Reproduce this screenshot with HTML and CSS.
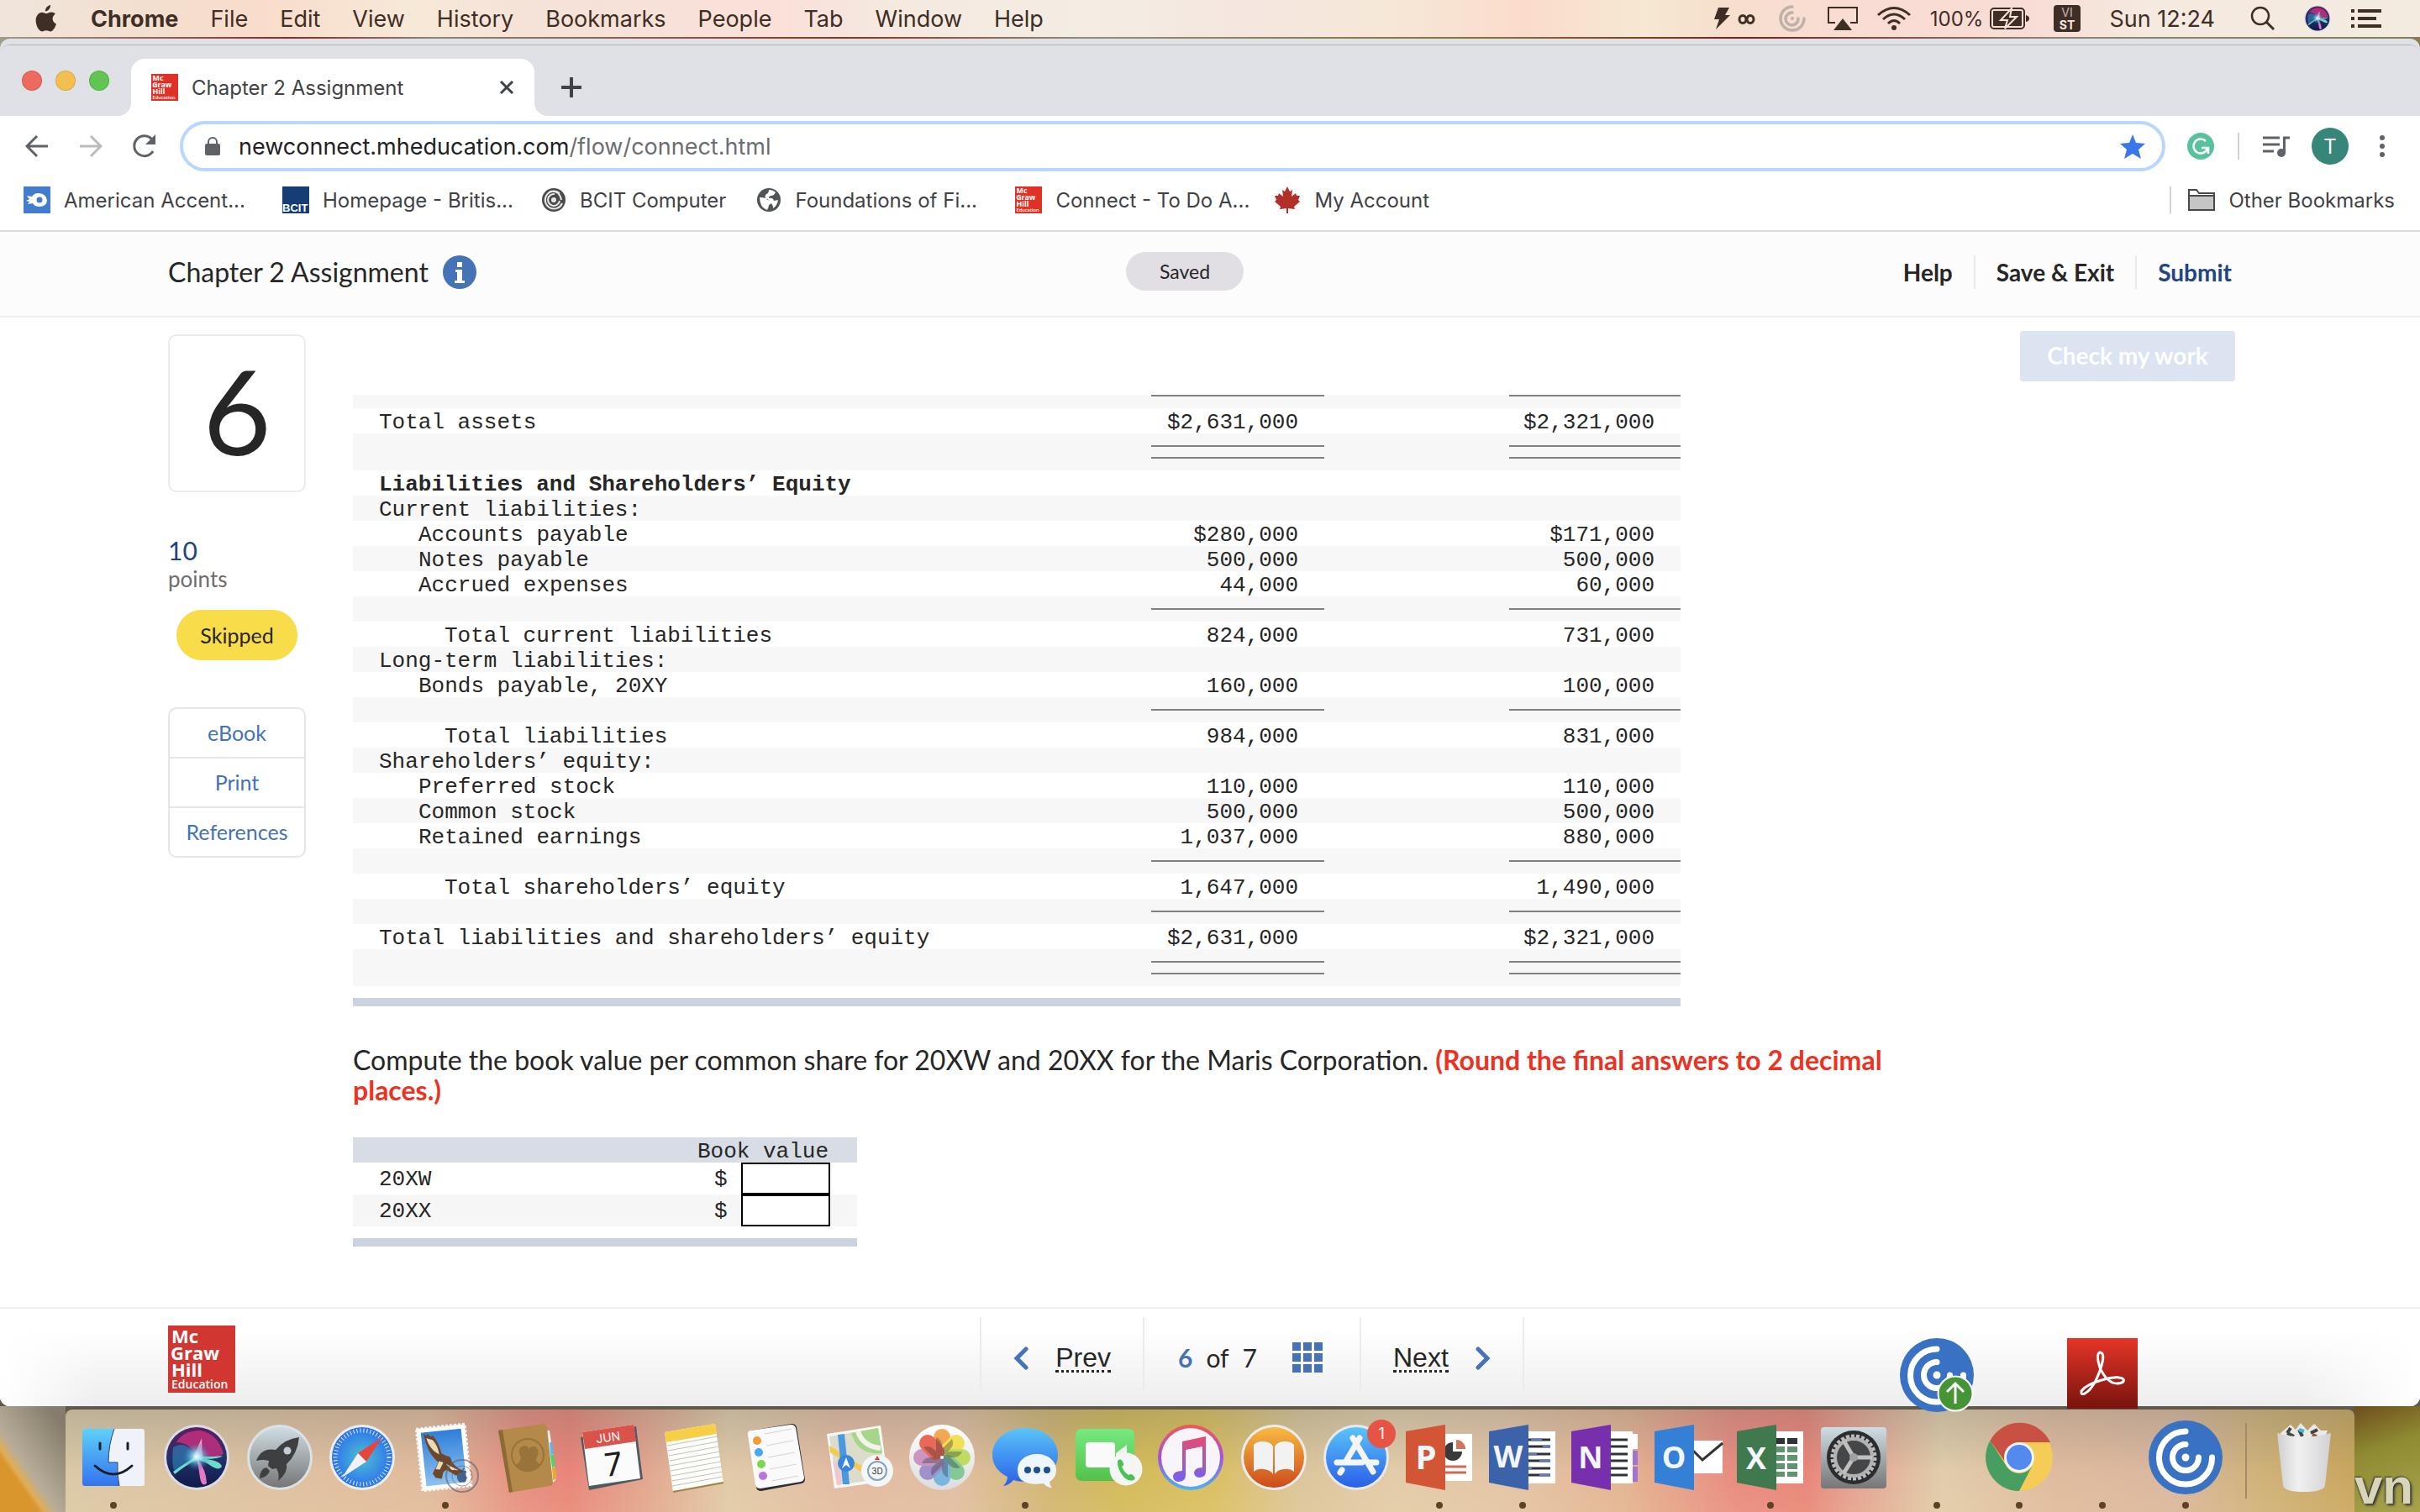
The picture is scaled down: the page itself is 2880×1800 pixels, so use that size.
FILE: index.html
```html
<!DOCTYPE html>
<html lang="en">
<head>
<meta charset="utf-8">
<title>Chapter 2 Assignment</title>
<link rel="stylesheet" href="styles.css">
</head>
<body>
<svg class="defs" width="0" height="0" aria-hidden="true">
  <defs>
    <linearGradient id="gBlue" x1="0" y1="0" x2="0" y2="1"><stop offset="0" stop-color="#5ac4f9"/><stop offset="1" stop-color="#2a5fe8"/></linearGradient>
    <linearGradient id="gFinder" x1="0" y1="0" x2="0" y2="1"><stop offset="0" stop-color="#5fd0f8"/><stop offset="1" stop-color="#3273ee"/></linearGradient>
    <linearGradient id="gSilver" x1="0" y1="0" x2="0" y2="1"><stop offset="0" stop-color="#cfdde3"/><stop offset="1" stop-color="#767676"/></linearGradient>
    <linearGradient id="gWhite" x1="0" y1="0" x2="0" y2="1"><stop offset="0" stop-color="#fff"/><stop offset="1" stop-color="#dcdcde"/></linearGradient>
    <linearGradient id="gOrange" x1="0" y1="0" x2="0" y2="1"><stop offset="0" stop-color="#f7bb42"/><stop offset="1" stop-color="#cc4b1d"/></linearGradient>
    <linearGradient id="gGreen" x1="0" y1="0" x2="0" y2="1"><stop offset="0" stop-color="#76ea80"/><stop offset="1" stop-color="#53c14b"/></linearGradient>
    <linearGradient id="gRed" x1="0" y1="0" x2="0" y2="1"><stop offset="0" stop-color="#e53528"/><stop offset="1" stop-color="#78130d"/></linearGradient>
    <linearGradient id="gMusic" x1="0" y1="0" x2="0" y2="1"><stop offset="0" stop-color="#f2584f"/><stop offset=".5" stop-color="#a64fe0"/><stop offset="1" stop-color="#47b6f5"/></linearGradient>
    <linearGradient id="gNote" x1="0" y1="0" x2="0" y2="1"><stop offset="0" stop-color="#ea4b6d"/><stop offset="1" stop-color="#6f62f6"/></linearGradient>
    <linearGradient id="gBin" x1="0" y1="0" x2="1" y2="0"><stop offset="0" stop-color="#cfcfd1"/><stop offset=".4" stop-color="#f1f1f2"/><stop offset="1" stop-color="#d2d2d4"/></linearGradient>
    <linearGradient id="gSky" x1="0" y1="0" x2="0" y2="1"><stop offset="0" stop-color="#2f7edb"/><stop offset="1" stop-color="#8dc2ef"/></linearGradient>
    <radialGradient id="gSafari"><stop offset="0" stop-color="#4fc0cf"/><stop offset="1" stop-color="#2b72ee"/></radialGradient>
    <radialGradient id="gGlow"><stop offset="0" stop-color="#fff"/><stop offset=".35" stop-color="#8fe6f5" stop-opacity=".7"/><stop offset="1" stop-color="#2c6fa8" stop-opacity="0"/></radialGradient>
    <linearGradient id="gSiri" x1="0" y1="0" x2="0" y2="1"><stop offset="0" stop-color="#5a1f5e"/><stop offset=".5" stop-color="#26306a"/><stop offset="1" stop-color="#0c1c4a"/></linearGradient>
  </defs>
  <symbol id="citrix" viewBox="0 0 88 88">
    <circle cx="44" cy="44" r="44" fill="#3972c2"/>
    <circle cx="44" cy="44" r="4.500" fill="#fff"/>
    <g fill="none" stroke="#fff" stroke-width="7" stroke-linecap="round"><path d="M44 13A31.500 31.500 0 1 0 75.500 44"/><path d="M44 28.500A15.500 15.500 0 1 0 59.500 44"/></g>
  </symbol>
  <symbol id="siri" viewBox="0 0 80 80">
    <circle cx="40" cy="40" r="39" fill="#dcdde2"/><circle cx="40" cy="40" r="36" fill="url(#gSiri)"/>
    <path d="M16 22Q24 8 44 8Q66 12 72 36Q60 42 40 40Q32 22 16 22Z" fill="#c9307f" opacity=".8"/>
    <path d="M40 40Q28 18 12 28Q10 52 14 56Q30 50 40 40Z" fill="#2f9ad0" opacity=".5"/>
    <path d="M12 57Q28 46 40 38Q56 40 71 38Q66 42 52 42Q68 44 70 51Q66 57 54 48Q44 42 38 44Q26 50 14 60Z" fill="#74eed6" opacity=".9"/>
    <path d="M40 40Q52 56 52 71Q46 76 44 64Q42 50 40 40Z" fill="#e877c4"/><path d="M36 40L46 17L47 42Z" fill="#f6b6dc" opacity=".8"/>
    <circle cx="40" cy="39" r="17" fill="url(#gGlow)"/>
  </symbol>
</svg>

<header class="menubar">
  <svg class="apple" viewBox="0 0 26 32" aria-label="Apple"><path d="M18 0c.3 3.600-2.600 7.400-6 7.400C11.600 4 14.600.500 18 0zM23.800 10.800c-5 3.200-3.700 9.800 1.200 11.600C23.700 26.400 20.900 31.500 18 31.500c-2 0-2.700-1.200-5-1.200s-3.200 1.200-5 1.200C4.500 31.500.6 24.600.6 18.600c0-6 3.600-9.900 7.400-9.900 2.400 0 3.900 1.400 5.500 1.400s2.900-1.500 5.900-1.500c1.800 0 3.400.800 4.400 2.200z" fill="#3e2e26"/></svg>
  <nav class="menus" aria-label="Application menu">
    <button class="app">Chrome</button><button>File</button><button>Edit</button><button>View</button><button>History</button><button>Bookmarks</button><button>People</button><button>Tab</button><button>Window</button><button>Help</button>
  </nav>
  <div class="status">
    <svg width="54" height="32" viewBox="0 0 54 32" class="m-bolt"><path d="M8 3h13l-5 9h6L5 29l4-12H3z" fill="#3e2e26"/><g fill="none" stroke="#3e2e26" stroke-width="3"><ellipse cx="37" cy="17" rx="4" ry="4.500"/><ellipse cx="46" cy="17" rx="4" ry="4.500"/></g></svg>
    <svg width="32" height="32" viewBox="0 0 32 32" class="m-citrix"><g fill="none" stroke="#bfb0a8" stroke-width="3.500" stroke-linecap="round"><path d="M16 2A14 14 0 1 0 30 16"/><path d="M16 9A7.500 7.500 0 1 0 23 16"/></g><circle cx="16" cy="16" r="2" fill="#bfb0a8"/></svg>
    <svg width="36" height="30" viewBox="0 0 36 30" class="m-air"><path d="M9 20H1V2h34v18h-8" fill="none" stroke="#3e2e26" stroke-width="2"/><path d="M18 15l11 14H7z" fill="#3e2e26"/></svg>
    <svg width="42" height="30" viewBox="0 0 42 30" class="m-wifi"><g fill="none" stroke="#3e2e26" stroke-width="3"><path d="M2 11Q21-6 40 11"/><path d="M8 16Q21 4 34 16"/><path d="M14 21Q21 14 28 21"/></g><circle cx="21" cy="26" r="3" fill="#3e2e26"/></svg>
    <span class="pct">100%</span>
    <svg width="48" height="26" viewBox="0 0 48 26" class="m-batt"><rect x="1" y="1" width="40" height="24" rx="4" fill="none" stroke="#3e2e26" stroke-width="2"/><rect x="4" y="4" width="34" height="18" rx="1" fill="#3e2e26"/><path d="M43 9q4 1 4 4t-4 4z" fill="#3e2e26"/><path d="M26 1L13 15h8l-3 10 14-14h-8z" fill="#3e2e26" stroke="#f8e3db" stroke-width="2"/></svg>
    <svg width="32" height="32" viewBox="0 0 32 32" class="m-vist"><rect width="32" height="32" rx="4" fill="#3e2e26"/><g fill="#f8e8e0" font-family="Inter, sans-serif" font-size="14" text-anchor="middle"><text x="16" y="14" opacity=".7">VI</text><text x="16" y="29" font-weight="700">ST</text></g></svg>
    <span class="clock">Sun 12:24</span>
    <svg width="30" height="30" viewBox="0 0 30 30" class="m-search"><circle cx="12" cy="12" r="10" fill="none" stroke="#3e2e26" stroke-width="2.500"/><path d="M19 19l9 9" stroke="#3e2e26" stroke-width="3"/></svg>
    <svg width="32" height="32" class="m-siri"><use href="#siri"/></svg>
    <svg width="36" height="22" viewBox="0 0 36 22"><path d="M0 2h4M8 2h28M0 11h4M8 11h22M0 20h4M8 20h28" stroke="#3e2e26" stroke-width="4"/></svg>
  </div>
</header>

<div class="back-window">
<div class="window">
  <div class="tabstrip">
    <div class="lights"><button aria-label="Close" class="red"></button><button aria-label="Minimise" class="amber"></button><button aria-label="Zoom" class="green"></button></div>
    <div class="tab">
      <svg width="32" height="32" viewBox="0 0 80 80"><rect width="80" height="80" fill="#e03127"/><g class="mgh"><text x="4" y="21">Mc</text><text x="3" y="41">Graw</text><text x="4" y="61">Hill</text><text x="4" y="75" class="edu">Education</text></g></svg>
      <span>Chapter 2 Assignment</span>
      <button aria-label="Close tab"><svg width="18" height="18" viewBox="0 0 18 18"><path d="M2 2l14 14M16 2L2 16" stroke="#3f4246" stroke-width="3"/></svg></button>
    </div>
    <button class="newtab" aria-label="New tab"><svg width="24" height="24" viewBox="0 0 24 24"><path d="M12 0v24M0 12h24" stroke="#3f4246" stroke-width="4"/></svg></button>
  </div>

  <div class="toolbar">
    <button aria-label="Back"><svg width="28" height="28" viewBox="0 0 28 28"><path d="M27 14H3M14 2L2 14l12 12" fill="none" stroke="#5f6368" stroke-width="3"/></svg></button>
    <button aria-label="Forward"><svg width="28" height="28" viewBox="0 0 28 28"><path d="M1 14h24M14 2l12 12-12 12" fill="none" stroke="#b9bbbd" stroke-width="3"/></svg></button>
    <button aria-label="Reload"><svg width="28" height="28" viewBox="0 0 28 28"><path d="M24 20A12 12 0 1 1 23 6" fill="none" stroke="#5f6368" stroke-width="3"/><path d="M27 0v12H15z" fill="#5f6368"/></svg></button>
    <div class="omnibox">
      <svg width="18" height="22" viewBox="0 0 18 22"><rect y="8" width="18" height="14" rx="2" fill="#5f6368"/><path d="M4 9V6a5 5 0 0 1 10 0v3" fill="none" stroke="#5f6368" stroke-width="2"/></svg>
      <span class="url">newconnect.mheducation.com<i>/flow/connect.html</i></span>
      <svg width="30" height="29" viewBox="0 0 30 29"><path d="M15 0l4 10 11 1-8 7 3 11-10-6-10 6 3-11-8-7 11-1z" fill="#3b78e7"/></svg>
    </div>
    <svg class="gram" width="32" height="32" viewBox="0 0 32 32"><circle cx="16" cy="16" r="16" fill="#57c39d"/><path d="M22 10A8.500 8.500 0 1 0 24 19M17 18h8v7" fill="none" stroke="#fff" stroke-width="2.500"/></svg>
    <span class="sep"></span>
    <svg class="playlist" width="32" height="26" viewBox="0 0 32 26"><path d="M0 3h20M0 11h20M0 19h13" stroke="#5f6368" stroke-width="3"/><path d="M24 1.500h8v3h-5V21h-3z" fill="#5f6368"/><circle cx="22" cy="21" r="5" fill="#5f6368"/></svg>
    <button class="avatar">T</button>
    <button aria-label="Menu"><svg width="8" height="28" viewBox="0 0 8 28"><g fill="#5f6368"><circle cx="4" cy="4" r="3"/><circle cx="4" cy="14" r="3"/><circle cx="4" cy="24" r="3"/></g></svg></button>
  </div>

  <nav class="bookmarks" aria-label="Bookmarks">
    <a href="#" class="clipped"><svg width="32" height="32" viewBox="0 0 32 32"><rect width="32" height="32" fill="#437ccc"/><path d="M3 17l4-2-3-4 6 1q3-4 7-4 10 0 11 9-1 7-9 7-6 0-8-4l-6 1 2-3z" fill="#fff"/><circle cx="19" cy="16" r="3.500" fill="#437ccc"/></svg>American Accent...</a>
    <a href="#" class="clipped"><svg width="32" height="32" viewBox="0 0 32 32"><rect width="32" height="32" fill="#163e75"/><text x="0" y="30" font-family="Liberation Sans, sans-serif" font-size="13" font-weight="700" fill="#fff">BCIT</text></svg>Homepage - Britis...</a>
    <a href="#"><svg width="30" height="32" viewBox="1 0 30 32"><circle cx="16" cy="16" r="14" fill="#4a4a4a"/><g fill="none" stroke="#e8e8e8" stroke-width="2"><path d="M23 8A10.500 10.500 0 1 0 26 20"/><path d="M17 9A7 7 0 1 0 23 17"/><path d="M11 6q12-2 14 10"/></g><circle cx="16" cy="16" r="3" fill="#e8e8e8"/></svg>BCIT Computer</a>
    <a href="#" class="clipped"><svg width="30" height="32" viewBox="0 0 28 32"><circle cx="14" cy="16" r="14" fill="#505357"/><path d="M3 13q8 0 9 3 4 0 5 3-1 3-3 3 0 3-2 6Q3 25 3 13zM14 4q5 0 8 3-2 4-5 4-3 0-3 3 5-1 6 3l5-1q-1 7-6 10 0-5-3-6 1-4-5-5-3-3 0-6 3-1 3-5z" fill="#fff"/></svg>Foundations of Fi...</a>
    <a href="#" class="clipped"><svg width="32" height="32" viewBox="0 0 80 80"><rect width="80" height="80" fill="#e03127"/><g class="mgh"><text x="4" y="21">Mc</text><text x="3" y="41">Graw</text><text x="4" y="61">Hill</text><text x="4" y="75" class="edu">Education</text></g></svg>Connect - To Do A...</a>
    <a href="#"><svg width="32" height="32" viewBox="0 0 32 32"><path d="M16 0l3 6 3-2-1 8 5-4 1 3h4l-2 5 2 2-7 6 1 3-8-1v6h-2v-6l-8 1 1-3-7-6 2-2-2-5h4l1-3 5 4-1-8 3 2z" fill="#b3302a"/></svg>My Account</a>
    <a href="#" class="other"><svg width="32" height="28" viewBox="0 0 32 28"><path d="M1 26V2h9l3 4h18v20z" fill="#fff" stroke="#48494b" stroke-width="2"/><path d="M2 10h28v15H2z" fill="#c5c5c5"/><path d="M1 9h30" stroke="#48494b" stroke-width="2"/></svg>Other Bookmarks</a>
  </nav>

  <header class="apphead">
    <h1>Chapter 2 Assignment</h1>
    <button class="info" aria-label="Information"><svg width="40" height="40" viewBox="0 0 40 40"><circle cx="20" cy="20" r="20" fill="#4573b6"/><path d="M17 8h6v6h-6zM15 17h8v13h3v3H14v-3h3V20h-2z" fill="#fff"/></svg></button>
    <span class="saved">Saved</span>
    <nav class="actions"><a href="#">Help</a><a href="#">Save &amp; Exit</a><a href="#" class="submit">Submit</a></nav>
  </header>

  <main class="content">
    <aside class="side">
      <div class="number">6</div>
      <p class="score"><b>10</b>points</p>
      <span class="skipped">Skipped</span>
      <nav class="tools"><a href="#">eBook</a><a href="#">Print</a><a href="#">References</a></nav>
    </aside>
    <section class="question">
      <table class="sheet">
        <colgroup><col><col class="amt"><col class="gap"><col class="amt2"></colgroup>
        <tr class="thin"><td></td><td><span class="rule"></span></td><td></td><td><span class="rule"></span></td></tr>
        <tr><td>Total assets</td><td>$2,631,000</td><td></td><td>$2,321,000</td></tr>
        <tr class="tall"><td></td><td><span class="rule2"></span></td><td></td><td><span class="rule2"></span></td></tr>
        <tr><th scope="row">Liabilities and Shareholders’ Equity</th><td></td><td></td><td></td></tr>
        <tr><td>Current liabilities:</td><td></td><td></td><td></td></tr>
        <tr><td class="in1">Accounts payable</td><td>$280,000</td><td></td><td>$171,000</td></tr>
        <tr><td class="in1">Notes payable</td><td>500,000</td><td></td><td>500,000</td></tr>
        <tr><td class="in1">Accrued expenses</td><td>44,000</td><td></td><td>60,000</td></tr>
        <tr class="line"><td></td><td><span class="rule"></span></td><td></td><td><span class="rule"></span></td></tr>
        <tr><td class="in2">Total current liabilities</td><td>824,000</td><td></td><td>731,000</td></tr>
        <tr><td>Long-term liabilities:</td><td></td><td></td><td></td></tr>
        <tr><td class="in1">Bonds payable, 20XY</td><td>160,000</td><td></td><td>100,000</td></tr>
        <tr class="line"><td></td><td><span class="rule"></span></td><td></td><td><span class="rule"></span></td></tr>
        <tr><td class="in2">Total liabilities</td><td>984,000</td><td></td><td>831,000</td></tr>
        <tr><td>Shareholders’ equity:</td><td></td><td></td><td></td></tr>
        <tr><td class="in1">Preferred stock</td><td>110,000</td><td></td><td>110,000</td></tr>
        <tr><td class="in1">Common stock</td><td>500,000</td><td></td><td>500,000</td></tr>
        <tr><td class="in1">Retained earnings</td><td>1,037,000</td><td></td><td>880,000</td></tr>
        <tr class="line"><td></td><td><span class="rule"></span></td><td></td><td><span class="rule"></span></td></tr>
        <tr><td class="in2">Total shareholders’ equity</td><td>1,647,000</td><td></td><td>1,490,000</td></tr>
        <tr class="line"><td></td><td><span class="rule"></span></td><td></td><td><span class="rule"></span></td></tr>
        <tr><td>Total liabilities and shareholders’ equity</td><td>$2,631,000</td><td></td><td>$2,321,000</td></tr>
        <tr class="tall"><td></td><td><span class="rule2"></span></td><td></td><td><span class="rule2"></span></td></tr>
      </table>
      <div class="bar wide"></div>
      <p class="ask">Compute the book value per common share for 20XW and 20XX for the Maris Corporation. <strong>(Round the final answers to 2 decimal places.)</strong></p>
      <table class="answers">
        <colgroup><col><col class="cur"><col class="box"></colgroup>
        <tr><th colspan="3">Book value</th></tr>
        <tr><td><label for="xw">20XW</label></td><td>$</td><td><input id="xw" type="text"></td></tr>
        <tr><td><label for="xx">20XX</label></td><td>$</td><td><input id="xx" type="text"></td></tr>
      </table>
      <div class="bar narrow"></div>
    </section>
    <button class="check" disabled>Check my work</button>
  </main>

  <footer class="foot">
    <svg width="80" height="80" viewBox="0 0 80 80"><rect width="80" height="80" fill="#d13631"/><g class="mgh"><text x="4" y="21">Mc</text><text x="3" y="41">Graw</text><text x="4" y="61">Hill</text><text x="4" y="75" class="edu">Education</text></g></svg>
    <nav class="pager">
      <a href="#" class="step"><svg width="18" height="28" viewBox="0 0 18 28"><path d="M15 3L4 14l11 11" fill="none" stroke="#4573b6" stroke-width="5" stroke-linecap="round"/></svg><span>Prev</span></a>
      <div class="count"><b>6</b><span>of</span><span>7</span><svg width="36" height="36" viewBox="0 0 36 36"><path d="M0 0h10v10H0zM13 0h10v10H13zM26 0h10v10H26zM0 13h10v10H0zM13 13h10v10H13zM26 13h10v10H26zM0 26h10v10H0zM13 26h10v10H13zM26 26h10v10H26z" fill="#4573b6"/></svg></div>
      <a href="#" class="step"><span>Next</span><svg width="18" height="28" viewBox="0 0 18 28"><path d="M3 3l11 11L3 25" fill="none" stroke="#4573b6" stroke-width="5" stroke-linecap="round"/></svg></a>
    </nav>
  </footer>
</div>
</div>

<div class="shelf">
<span class="mark">vn</span>
<nav class="dock" aria-label="Dock">
  <ul>
    <li class="on"><svg viewBox="0 0 80 80"><rect x="3" y="6" width="74" height="68" rx="3" fill="#eff3f9"/><path d="M6 6h35q-7 19-7 40h11q-1 14 2 28H6q-3 0-3-3V9q0-3 3-3z" fill="url(#gFinder)"/><path d="M41 6q-7 19-7 40h11q-1 14 2 28" fill="none" stroke="#27446e" stroke-width="1"/><path d="M24 23v7M57 23v7M18 50q22 20 44 0" fill="none" stroke="#1b1f26" stroke-width="3" stroke-linecap="round"/></svg></li>
    <li><svg viewBox="0 0 80 80"><use href="#siri"/></svg></li>
    <li><svg viewBox="0 0 80 80"><circle cx="40" cy="40" r="39" fill="#dbe2e5"/><circle cx="40" cy="40" r="36" fill="url(#gSilver)"/><path d="M63 16Q46 18 35 31Q18 28 12 44Q20 42 27 44L26 50L31 54L36 53Q40 60 38 68Q50 58 48 48Q61 36 63 16z" fill="#3d3f41"/><circle cx="49" cy="32" r="4.500" fill="#c3ced3"/><path d="M24 52Q16 54 16 65Q26 63 28 56z" fill="#3d3f41"/></svg></li>
    <li><svg viewBox="0 0 80 80"><circle cx="40" cy="40" r="39" fill="#eceef0"/><circle cx="40" cy="40" r="36" fill="url(#gSafari)"/><circle cx="40" cy="40" r="32" fill="none" stroke="#dff0ff" stroke-width="5" stroke-dasharray="1 3"/><path d="M64 16L45 45L35 35z" fill="#e8443a"/><path d="M16 64L45 45L35 35z" fill="#f2f2f2"/></svg></li>
    <li class="on"><svg viewBox="0 0 80 80"><g transform="rotate(-6 38 40)"><rect x="9" y="3" width="58" height="74" fill="#fff" stroke="#f6f6f6" stroke-width="3" stroke-dasharray="3 2"/><rect x="14" y="8" width="48" height="64" fill="url(#gSky)"/><path d="M17 10l4 2 1-2 3 4 3-1q6 8 8 22l6 4q5 0 5 7 5 10 17 14l-4 1 2 3-12-1-10-8-4 2-3 8-7-2-3-5 8-13q-12-12-14-35z" fill="#6b472b"/><path d="M20 15l4 2 3 1q6 8 6 18l-5-4q-7-8-8-17zM40 48l14 9-8-1zM32 44l5 2-5 8-5-1z" fill="#eadabb"/></g><g fill="none" stroke="#5c5f70" opacity=".6"><circle cx="60" cy="62" r="19" stroke-width="2"/><circle cx="60" cy="62" r="12"/></g><path d="M60 58q3-4 5-1-2 4 1 7-3 8-6 5-3 3-6-4-1-8 6-7zM60 56q0-3 3-4 0 3-3 4z" fill="#45618f"/></svg></li>
    <li><svg viewBox="0 0 80 80"><path d="M60 8l6 0 8 58-8 8z" fill="#f3f3f3"/><path d="M66 22l3 0 2 14-4 1z" fill="#5ab8e8"/><path d="M67 37l4 0 2 14-4 1z" fill="#4fd06d"/><path d="M69 52l4 0 1 14-4 1z" fill="#e9a92e"/><path d="M5 8L58 0q4 0 5 4l7 66q0 4-4 4L18 82z" fill="#b48a4a"/><path d="M5 8L10 7l12 74-4 1z" fill="#8d6a35"/><circle cx="40" cy="37" r="19" fill="none" stroke="#98733a" stroke-width="2"/><path d="M26 49q6-4 6-9-6-12 4-14 6 0 5 7 0-7 7-6 8 4 2 15 0 4 5 6-6 9-15 8-9 0-14-7z" fill="#98733a"/></svg></li>
    <li><svg viewBox="0 0 80 80"><path d="M4 16L70 3l8 63-64 13z" fill="#4f5a63"/><path d="M6 10L67 1l8 64-61 9z" fill="#fbfbfb"/><path d="M6 10L67 1l3 20-61 9z" fill="#d9534a"/><g font-family="Inter, sans-serif" text-anchor="middle" transform="rotate(-8 40 40)"><text x="40" y="21" font-size="14" fill="#fff">JUN</text><text x="42" y="62" font-size="38" fill="#1d1d1d">7</text></g></svg></li>
    <li><svg viewBox="0 0 80 80"><path d="M5 10L65 0l10 70-60 11z" fill="#fcfcf8"/><path d="M5 10L65 0l2 12L7 22z" fill="#f7cf46"/><path d="M8 26l60-11M9 32l60-11M10 38l60-11M11 44l60-11M11 50l60-11M12 56l60-11M13 62l60-11M14 68l60-11M14 74l60-11" stroke="#c2c2bd" stroke-width="1"/><path d="M15 81l60-11" stroke="#9b8544" stroke-width="2"/></svg></li>
    <li><svg viewBox="0 0 80 80"><path d="M7 13q-1-4 3-5L58 0q5 0 6 4l10 62q0 4-4 5l-48 9q-5 0-6-4z" fill="#2c2f34"/><path d="M6 13q-1-4 3-5L57 1q5 0 6 4l10 59q0 4-4 5l-48 8q-5 0-6-4z" fill="#fafafa"/><path d="M26 12l32-6M28 26l32-6M30 40l32-6M32 54l32-6M34 68l32-6" stroke="#d4d4d4"/><circle cx="17" cy="20" r="5" fill="#f39a37"/><circle cx="19" cy="34" r="5" fill="#46a8f2"/><circle cx="22" cy="48" r="5" fill="#7ed64e"/><circle cx="24" cy="62" r="5" fill="#bb74dc"/></svg></li>
    <li><svg viewBox="0 0 80 80"><path d="M1 12L65 2l9 66-64 9z" fill="#f7f7f5"/><path d="M4 15L62 5l8 60-57 8z" fill="#dcdccb"/><path d="M30 11L62 5l5 30Q38 38 30 11z" fill="#a5d68a"/><path d="M38 9q6 18 27 20" fill="none" stroke="#f4f2ea" stroke-width="6"/><path d="M4 26l54 34v7L5 34z" fill="#f6c84b"/><path d="M14 13l8-1 6 60h-8z" fill="#4a98e0"/><path d="M8 44l8 6 3 22-6 1z" fill="#f3c6cf"/><circle cx="24" cy="47" r="10" fill="#3787dc"/><path d="M24 40l5 13-5-4-5 4z" fill="#fff"/><circle cx="61" cy="56" r="19" fill="#f4f6f7"/><circle cx="61" cy="56" r="11" fill="none" stroke="#7ea3bd" stroke-width="2"/><path d="M61 38l3 5h-6z" fill="#e0402f"/><text x="61" y="60" font-family="Inter, sans-serif" font-size="10" text-anchor="middle" fill="#333">3D</text></svg></li>
    <li><svg viewBox="0 0 80 80"><circle cx="40" cy="40" r="39" fill="url(#gWhite)"/><g opacity=".85"><rect x="30" y="6" width="20" height="34" rx="10" fill="#f19a37"/><rect x="30" y="6" width="20" height="34" rx="10" fill="#f0dc3c" transform="rotate(45 40 40)"/><rect x="30" y="6" width="20" height="34" rx="10" fill="#b9d94c" transform="rotate(90 40 40)"/><rect x="30" y="6" width="20" height="34" rx="10" fill="#73c487" transform="rotate(135 40 40)"/><rect x="30" y="6" width="20" height="34" rx="10" fill="#6aaee0" transform="rotate(180 40 40)"/><rect x="30" y="6" width="20" height="34" rx="10" fill="#9384c8" transform="rotate(225 40 40)"/><rect x="30" y="6" width="20" height="34" rx="10" fill="#c487b8" transform="rotate(270 40 40)"/><rect x="30" y="6" width="20" height="34" rx="10" fill="#e8503c" transform="rotate(315 40 40)"/></g><g fill="#333" opacity=".35"><path d="M40 40l-7-7V16q7 3 7 10z"/><path d="M40 40l-7-7V16q7 3 7 10z" transform="rotate(45 40 40)"/><path d="M40 40l-7-7V16q7 3 7 10z" transform="rotate(90 40 40)"/><path d="M40 40l-7-7V16q7 3 7 10z" transform="rotate(135 40 40)"/><path d="M40 40l-7-7V16q7 3 7 10z" transform="rotate(180 40 40)"/><path d="M40 40l-7-7V16q7 3 7 10z" transform="rotate(225 40 40)"/><path d="M40 40l-7-7V16q7 3 7 10z" transform="rotate(270 40 40)"/><path d="M40 40l-7-7V16q7 3 7 10z" transform="rotate(315 40 40)"/></g><circle cx="40" cy="40" r="2" fill="#fff"/></svg></li>
    <li class="on"><svg viewBox="0 0 80 80"><path d="M40 5c22 0 39 14 39 32S62 69 40 69q-8 0-14-2-5 6-12 7 5-5 5-11Q1 54 1 37C1 19 18 5 40 5z" fill="url(#gBlue)"/><path d="M54 36c13 0 23 8 23 19 0 6-3 11-8 14q0 4 3 7-6 0-10-5-31 4-31-16c0-11 10-19 23-19z" fill="#eef5fc"/><g fill="#1f4e94"><circle cx="43" cy="55" r="4"/><circle cx="54" cy="55" r="4"/><circle cx="66" cy="55" r="4"/></g></svg></li>
    <li><svg viewBox="0 0 80 80"><rect x="1" y="6" width="70" height="62" rx="7" fill="url(#gGreen)"/><rect x="13" y="22" width="35" height="30" rx="4" fill="#fafafa"/><path d="M49 35l13-10v24l-13-8z" fill="#f0f0f0"/><circle cx="61" cy="54" r="19.500" fill="#f3f6f2"/><path d="M51 44q4-4 7 3 1 2-2 4 3 7 8 10 3-2 5 0 5 4 1 6-5 2-11-3Q50 54 51 44z" fill="#4bc253"/></svg></li>
    <li><svg viewBox="0 0 80 80"><circle cx="40" cy="40" r="39" fill="url(#gMusic)"/><circle cx="40" cy="40" r="35" fill="#f7f4fa"/><path d="M30 21l28-6v42q0 7-8 7-6-1-6-6 1-6 10-6V27l-20 4v30q0 8-9 8-6-1-6-7 1-6 11-6z" fill="url(#gNote)"/></svg></li>
    <li><svg viewBox="0 0 80 80"><circle cx="40" cy="40" r="39" fill="#ececee"/><circle cx="40" cy="40" r="36" fill="url(#gOrange)"/><path d="M39 27q-3-6-12-6-8 0-11 4v32q5-4 12-3 8 1 11 6zM41 27q3-6 12-6 8 0 11 4v32q-5-4-12-3-8 1-11 6z" fill="#f2f2f2"/></svg></li>
    <li><svg viewBox="0 0 80 80"><circle cx="40" cy="40" r="39" fill="#e8e9ec"/><circle cx="40" cy="40" r="36" fill="url(#gBlue)"/><path d="M44 17L27 46M36 17l24 40M17 46h30M56 46h8M23 55l-2 3" stroke="#f4f5f7" stroke-width="7" stroke-linecap="round"/></svg><span class="badge">1</span></li>
    <li class="on"><svg viewBox="0 0 80 80"><path d="M46 12h33v56H46z" fill="#fff"/><path d="M56 22a11 11 0 1 0 11 11H56z" fill="#3a3a3a"/><path d="M60 19a11 11 0 0 1 11 11H60z" fill="#cf7560"/><path d="M46 51h26M46 58h26" stroke="#cf6a53" stroke-width="3"/><path d="M0 9l47-8v78L0 70z" fill="#d25636"/><text x="24" y="54" class="off">P</text></svg></li>
    <li class="on"><svg viewBox="0 0 80 80"><path d="M46 9h33v62H46z" fill="#fff"/><path d="M46 19h27M46 27h27M46 36h27M46 44h27M46 53h27M46 61h27" stroke="#2f3338" stroke-width="3"/><path d="M50 19h13M64 27h9M46 36h11M60 44h13M46 53h5M60 61h13" stroke="#5e7bb4" stroke-width="3"/><path d="M0 9l47-8v78L0 70z" fill="#3c62aa"/><text x="23" y="52" class="off small">W</text></svg></li>
    <li><svg viewBox="0 0 80 80"><path d="M70 12h9v18h-9z" fill="#fff"/><path d="M70 32h9v17h-9zM70 51h9v18h-9z" fill="#a373d4"/><path d="M46 9h27v62H46z" fill="#fff"/><path d="M46 19h21M46 27h21M46 36h21M46 44h21M46 53h21M46 61h21" stroke="#2f3338" stroke-width="3"/><path d="M0 9l47-8v78L0 70z" fill="#772fae"/><text x="23" y="53" class="off small">N</text></svg></li>
    <li><svg viewBox="0 0 80 80"><path d="M40 20h41v39H40z" fill="#fff"/><path d="M46 32l11 11 24-20" fill="none" stroke="#333" stroke-width="3"/><path d="M0 9l47-8v78L0 70z" fill="#3380d6"/><text x="23" y="53" class="off small">O</text></svg></li>
    <li class="on"><svg viewBox="0 0 80 80"><path d="M46 9h33v62H46z" fill="#fff"/><path d="M46 17h11v7H46zM60 17h12v7H60z" fill="#2f3338"/><path d="M46 27h11v7H46zM60 27h12v7H60zM46 37h11v7H46zM60 37h12v7H60zM46 47h11v7H46zM60 47h12v7H60zM46 57h11v6H46zM60 57h12v6H60z" fill="#5f946f"/><path d="M0 9l47-8v78L0 70z" fill="#41794e"/><text x="23" y="54" class="off small">X</text></svg></li>
    <li><svg viewBox="0 0 80 80"><rect x="1" y="4" width="78" height="73" rx="4" fill="url(#gSilver)"/><circle cx="40" cy="40" r="32" fill="#2b2c2e"/><circle cx="40" cy="40" r="25" fill="#444648" stroke="#bcbcbc" stroke-width="5" stroke-dasharray="4 2"/><circle cx="40" cy="40" r="22" fill="none" stroke="#b2b2b2" stroke-width="4"/><path d="M40 40L28 20M40 40h22M40 40L28 59" stroke="#c0c0c0" stroke-width="5"/><circle cx="40" cy="40" r="5" fill="#a0a0a0"/></svg></li>
    <li class="on"><svg class="jump" viewBox="0 0 88 88"><use href="#citrix"/><circle cx="66" cy="66" r="20.500" fill="#459435" stroke="#fff" stroke-width="2"/><path d="M66 78V55M56 64l10-10 10 10" fill="none" stroke="#fff" stroke-width="3"/></svg></li>
    <li class="on"><svg viewBox="0 0 80 80"><circle cx="40" cy="40" r="40" fill="#f5cd56"/><path d="M5.400 20A40 40 0 0 1 77 22H40a18 18 0 0 0-17 23z" fill="#c95144"/><path d="M5.400 20A40 40 0 0 0 40 80l15-29a18 18 0 0 1-31-2z" fill="#479d62"/><circle cx="40" cy="40" r="18" fill="#f3f3f3"/><circle cx="40" cy="40" r="15" fill="#5489ee"/></svg></li>
    <li class="on"><svg class="jump pdf" viewBox="0 0 84 84"><rect width="84" height="84" fill="url(#gRed)"/><path d="M39 17q-5 2 0 18 9 20 22 19 8-1 6-5-5-5-26 1-18 5-24 13-1 5 4 3 11-6 19-30 6-19-1-19z" fill="none" stroke="#fff" stroke-width="3"/></svg></li>
    <li class="on"><svg class="big" viewBox="0 0 88 88"><use href="#citrix"/></svg></li>
  </ul>
  <div class="trash"><svg viewBox="0 0 80 84"><path d="M12 12L24 2l6 6 6-8 8 9 8-8 8 8 8 0-4 10H14z" fill="#e9e9e9"/><path d="M20 12l8 4M34 8l4 8M48 12l8-4M24 6l-4 6" stroke="#444" stroke-width="4"/><path d="M34 8l6 2" stroke="#3db8d8" stroke-width="4"/><path d="M50 14l5 2" stroke="#a34d27" stroke-width="4"/><path d="M8 12q32 9 64 0l-7 62q-1 8-25 8t-25-8z" fill="url(#gBin)"/></svg></div>
</nav>
</div>
</body>
</html>
```
FILE: styles.css
```css
* { box-sizing: border-box; }
body {
  margin: 0;
  min-height: 100vh;
  display: flex;
  flex-direction: column;
  font-family: Inter, "Liberation Sans", sans-serif;
  color: #262626;
  background: linear-gradient(90deg, #a29b8b, #8f2a25 12%, #8d8676 18%, #90341f 35%, #948c7c 45%, #8b7134 62%, #7d1f1a 72%, #8e8776 85%, #8a7d55);
}
button { border: 0; padding: 0; background: none; font: inherit; color: inherit; }
a { color: inherit; text-decoration: none; }
svg { display: block; flex: none; }
p, h1, ul { margin: 0; padding: 0; }
.defs { position: absolute; }
.mgh { fill: #fff; font: 700 22px "Open Sans", sans-serif; }
.mgh .edu { font-size: 14px; font-weight: 600; }

.menubar {
  display: flex;
  align-items: center;
  justify-content: space-between;
  height: 44px;
  margin-bottom: 2px;
  padding: 0 46px 0 42px;
  font-size: 27px;
  color: #3e2e26;
  background: linear-gradient(90deg, #f0e5dc, #f3dfcf 6%, #f9dccc 11%, #f7e9d8 17%, #f5e2d8 22%, #fae0d9 32%, #f5e9e0 37%, #f3ede4 45%, #f5e6df 52%, #f6e8d8 57%, #fbdccc 63%, #f6e8d2 68%, #f6dfcd 71%, #f9dcd2 76%, #f8ddd6 84%, #f5eae0 89%, #f3ebe0);
}
.apple { width: 26px; height: 32px; }
.menus { display: flex; gap: 38px; margin: 0 auto 0 40px; }
.menus .app { font-weight: 700; }
.status { display: flex; align-items: center; }
.m-bolt, .m-citrix { margin-right: 26px; }
.m-air { margin-right: 22px; }
.m-wifi { margin-right: 22px; }
.pct { font-size: 24px; margin-right: 8px; }
.m-batt { margin-right: 28px; }
.m-vist { margin-right: 34px; }
.clock { margin-right: 42px; }
.m-search { margin-right: 34px; }
.m-siri { margin-right: 24px; }

.back-window {
  position: relative;
  z-index: 1;
  flex: 1;
  display: flex;
  flex-direction: column;
  padding-top: 7px;
  border-radius: 12px;
  background: #dfe2e5;
}
.window {
  flex: 1;
  display: flex;
  flex-direction: column;
  border-top: 1px solid #b1b3b6;
  border-radius: 12px;
  overflow: hidden;
  background: #fff;
}
.tabstrip { display: flex; align-items: center; height: 84px; padding-left: 26px; background: #dfe1e6; }
.lights { display: flex; gap: 16px; margin-right: 26px; }
.lights button { width: 24px; height: 24px; border-radius: 50%; border: 1px solid rgba(0,0,0,.12); }
.red { background: #ee6a5f; }
.amber { background: #f5bf4f; }
.green { background: #61c554; }
.tab {
  position: relative;
  align-self: flex-end;
  display: flex;
  align-items: center;
  gap: 16px;
  width: 480px;
  height: 68px;
  padding: 0 24px;
  border-radius: 16px 16px 0 0;
  background: #fff;
  font-size: 24px;
  color: #3f4246;
}
.tab::before, .tab::after { content: ""; position: absolute; bottom: 0; width: 16px; height: 16px; }
.tab::before { left: -16px; background: radial-gradient(circle at 0 0, transparent 16px, #fff 16px); }
.tab::after { right: -16px; background: radial-gradient(circle at 100% 0, transparent 16px, #fff 16px); }
.tab button { margin-left: auto; }
.newtab { margin: 16px 0 0 32px; }

.toolbar { display: flex; align-items: center; height: 72px; padding: 0 41px 0 30px; gap: 36px; }
.omnibox {
  flex: 1;
  display: flex;
  align-items: center;
  height: 60px;
  margin-left: -8px;
  padding: 0 20px 0 26px;
  border: 4px solid #b9d6fc;
  border-radius: 30px;
}
.url { flex: 1; margin-left: 22px; font-size: 27px; color: #202124; }
.url i { font-style: normal; color: #6a6e73; }
.gram { margin-left: -10px; }
.sep { width: 2px; height: 32px; margin: 0 -8px; background: #cfd1d4; }
.playlist { margin-right: -10px; }
.avatar { width: 44px; height: 44px; border-radius: 50%; background: #36877a; color: #fff; font-size: 24px; }

.bookmarks {
  display: flex;
  align-items: center;
  gap: 32px;
  height: 66px;
  padding: 0 30px 8px 28px;
  border-bottom: 2px solid #dadbe0;
  font-size: 24px;
  color: #3f4246;
  white-space: nowrap;
}
.bookmarks a { display: flex; align-items: center; gap: 16px; height: 32px; margin-right: 4px; }
.bookmarks .clipped { width: 276px; margin-right: 0; }
.bookmarks .other { margin: 0 0 0 auto; padding-left: 20px; border-left: 2px solid #cfd1d4; }

.apphead, .content { font-family: Lato, "Open Sans", sans-serif; }
.apphead {
  position: relative;
  display: flex;
  align-items: center;
  height: 102px;
  padding: 0 220px 6px 200px;
  background: #fcfcfc;
  border-bottom: 2px solid #eee;
}
.apphead h1 { font-size: 32px; font-weight: 400; }
.info { margin: 2px auto 0 17px; }
.saved {
  position: absolute;
  left: 1340px;
  width: 140px;
  line-height: 46px;
  border-radius: 23px;
  background: #e1dfe4;
  font-size: 23px;
  text-align: center;
}
.actions { display: flex; font-size: 28px; font-weight: 700; line-height: 40px; padding-top: 2px; }
.actions a { padding: 0 25px; border-left: 2px solid #e9e9e9; }
.actions a:first-child { border: 0; }
.actions a:last-child { padding-right: 4px; }
.submit { color: #1f4583; }

.content {
  flex: 1;
  display: grid;
  grid-template-columns: 164px 1fr 256px;
  gap: 56px;
  align-items: start;
  padding: 16px 220px 0 200px;
}
.side { display: flex; flex-direction: column; padding-top: 4px; }
.number { height: 188px; border: 2px solid #ebebeb; border-radius: 10px; font-size: 140px; line-height: 176px; text-align: center; }
.score { margin: 52px 0 20px; font-size: 26px; line-height: 34px; color: #6d6d6d; }
.score b { display: block; font-size: 30px; font-weight: 400; color: #1b4480; }
.skipped { align-self: center; width: 144px; border-radius: 30px; background: #f9dc4a; font-size: 25px; line-height: 60px; text-align: center; }
.tools { margin-top: 56px; border: 2px solid #e6e6e6; border-radius: 10px; font-size: 25px; line-height: 57px; text-align: center; color: #4373b6; }
.tools a { display: block; }
.tools a + a { border-top: 2px solid #e6e6e6; }

.question { padding-top: 76px; }
table { border-collapse: collapse; table-layout: fixed; font-family: "Liberation Mono", monospace; font-size: 26px; line-height: 26px; }
td, th { padding: 0; }
.sheet { width: 1580px; }
.amt { width: 206px; }
.gap { width: 220px; }
.amt2 { width: 204px; }
.sheet tr:nth-child(odd) { background: #f7f7f7; }
.sheet td, .sheet th { height: 30px; text-align: right; padding: 4px 31px 0 0; }
.sheet td:first-child, .sheet th { text-align: left; padding: 4px 0 0 31px; }
.sheet td.in1:first-child { padding-left: 78px; }
.sheet td.in2:first-child { padding-left: 109px; }
.sheet .thin td, .sheet .line td, .sheet .tall td { padding: 0; vertical-align: middle; }
.sheet .thin td { height: 16px; vertical-align: top; }
.sheet .tall td { height: 44px; }
.rule { display: block; height: 2px; background: #808080; }
.rule2 { display: block; height: 16px; border: solid #808080; border-width: 2px 0; }
.bar { height: 10px; background: #ccd2df; }
.wide { width: 1580px; margin-top: 14px; }
.narrow { width: 600px; margin-top: 14px; }
.ask { max-width: 1880px; margin: 46px 0 38px; font-size: 32px; line-height: 36px; }
.ask strong { color: #ea3323; }
.answers { width: 600px; }
.answers th { height: 30px; background: #d8dce5; font-weight: 400; text-align: right; padding: 4px 34px 0 0; }
.answers td { height: 38px; padding-top: 2px; }
.answers td:first-child { padding-left: 31px; }
.answers td:last-child { padding: 0; }
.answers tr:nth-child(3) { background: #f6f6f6; }
.cur { width: 32px; }
.box { width: 138px; }
.answers input { display: block; width: 106px; height: 38px; border: 2px solid #000; border-radius: 0; padding: 0 6px; background: #fff; font: inherit; }
.check { height: 60px; padding-bottom: 2px; border-radius: 4px; background: #dbe4f0; color: #fff; font-size: 28px; font-weight: 700; }

.foot {
  display: grid;
  grid-template-columns: 966px auto;
  justify-content: start;
  align-items: center;
  height: 118px;
  padding: 3px 0 0 200px;
  border-top: 2px solid #f0f0f0;
  background:
    linear-gradient(90deg, #fff, transparent 4%, transparent 95%, #fff),
    linear-gradient(#fff 20%, #ededed);
}
.pager { display: flex; align-self: start; margin-top: 7px; height: 88px; border-left: 2px solid #ebebeb; font-size: 30px; }
.step, .count { display: flex; align-items: center; border-right: 2px solid #ebebeb; }
.step { width: 194px; padding: 10px 38px 0; justify-content: space-between; font-family: "Liberation Sans", sans-serif; font-size: 32px; line-height: 30px; }
.step span { border-bottom: 3px dotted #262626; }
.count { width: 258px; padding: 8px 44px 0 40px; gap: 16px; font-family: Lato, sans-serif; }
.count b { color: #4573b6; }
.count svg { margin-left: auto; }

.shelf {
  position: relative;
  margin-top: -12px;
  padding: 16px 78px 0;
  background:
    linear-gradient(55deg, #d9962c 38px, #dfae58 44px, #b7ad99 56px, #857c6b 120px) left bottom / 78px 126px no-repeat,
    linear-gradient(160deg, #6f4d1d, #8e8b32 40%, #a9a34e) right bottom / 78px 126px no-repeat,
    #5f584b;
}
.dock {
  position: relative;
  z-index: 2;
  display: flex;
  height: 122px;
  padding-left: 8px;
  border-radius: 8px 8px 0 0;
  background:
    linear-gradient(rgba(130,130,120,.3), rgba(255,220,180,.1) 60%, rgba(255,225,180,.2)),
    linear-gradient(90deg, #d6c6a5, #d9bfa0 8%, #deb799 16%, #e3857a 20%, #e67b72 22%, #df9c88 25%, #ddc9a8 29%, #e0b7a0 34%, #dcbba1 39%, #cbb16c 43%, #cdb650 46%, #d6bb57 50%, #d8c39a 54%, #dfcaa8 58%, #e0c2a5 63%, #e0b090 68%, #e6827a 73%, #e67b72 76%, #e19a8c 78%, #ddcbaa 82%, #dcb79c 87%, #d6b39c 92%, #c9ad72 96%, #c3a055);
}
.dock ul { flex: 1; display: flex; list-style: none; }
.dock li { position: relative; flex: 1; display: flex; flex-direction: column; align-items: center; justify-content: space-between; padding: 17px 0 4px; }
.dock li svg { width: 80px; height: 80px; overflow: visible; }
.dock li.on::after { content: ""; width: 8px; height: 8px; border-radius: 50%; background: #5c4327; margin-top: auto; }
.dock li .big { width: 88px; height: 88px; margin-top: -4px; }
.dock li .jump { position: absolute; top: -85px; width: 88px; height: 88px; }
.dock li .pdf { width: 84px; height: 84px; }
.off { font: 700 40px "Open Sans", sans-serif; fill: #f3f6fb; text-anchor: middle; }
.off.small { font-size: 36px; }
.badge { position: absolute; top: 12px; left: 62px; width: 34px; border-radius: 50%; background: #e65445; color: #fff; font-size: 18px; line-height: 34px; text-align: center; }
.trash { display: flex; width: 130px; margin: 16px 0 16px 22px; padding-left: 28px; border-left: 2px solid #a58a63; }
.trash svg { width: 80px; height: 84px; }
.mark { position: absolute; right: 8px; bottom: 8px; font: 700 60px/44px "Liberation Sans", sans-serif; color: #d9d5bb; text-shadow: 2px 2px 3px #333, -1px -1px 2px #333; }
```
